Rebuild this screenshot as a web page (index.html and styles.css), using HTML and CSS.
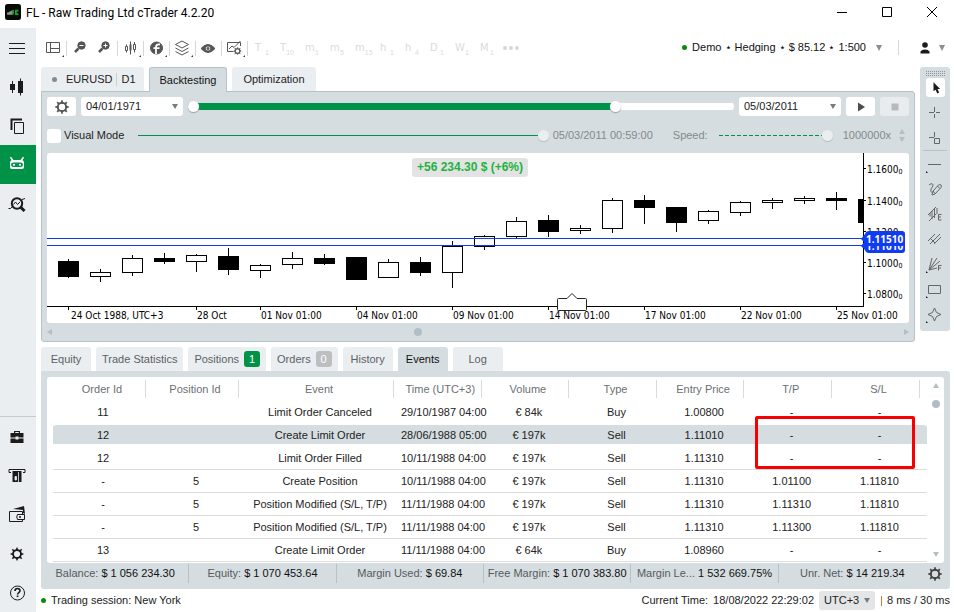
FILE: index.html
```html
<!DOCTYPE html>
<html lang="en">
<head>
<meta charset="utf-8">
<title>FL - Raw Trading Ltd cTrader 4.2.20</title>
<link rel="stylesheet" href="styles.css">
</head>
<body>
<svg class="defs" width="0" height="0" aria-hidden="true">
  <symbol id="gear" viewBox="0 0 16 16">
    <circle cx="8" cy="8" r="4.2" fill="none" stroke="currentColor" stroke-width="1.8"/>
    <path d="M6.800 4.200 8 1.200l1.200 3zM6.800 11.800 8 14.800l1.200-3zM4.200 6.800 1.200 8l3 1.200zM11.800 6.800l3 1.200-3 1.200zM4.400 6 3 3l3 1.400zM11.600 6 13 3l-3 1.400zM4.400 10 3 13l3-1.400zM11.600 10l1.400 3-3-1.400z" fill="currentColor" stroke="currentColor" stroke-width=".8"/>
  </symbol>
</svg>

<header class="titlebar">
  <svg class="app-icon" viewBox="0 0 16 16"><rect width="16" height="16" rx="2.500" fill="#080a08"/><path d="M2 10h1V9h1v1h1V8h1v2h1V6.500" fill="none" stroke="#8b9a8e" stroke-width="1.300"/><path d="M8 6v4.500M13.500 6.700h-2.600v3.400h2.600" fill="none" stroke="#18a22c" stroke-width="1.800"/></svg>
  <h1>FL - Raw Trading Ltd cTrader 4.2.20</h1>
  <div class="window-buttons">
    <button aria-label="Minimize"><svg viewBox="0 0 12 12"><path d="M1 6.500h10"/></svg></button>
    <button aria-label="Maximize"><svg viewBox="0 0 12 12"><path d="M1.500 1.500h9v9h-9z"/></svg></button>
    <button aria-label="Close"><svg viewBox="0 0 12 12"><path d="M1 1l10 10M11 1 1 11"/></svg></button>
  </div>
</header>

<div class="app">
  <nav class="sidebar">
    <button aria-label="Menu"><svg viewBox="0 0 24 24"><path class="line" d="M4 7.500h16M4 12.500h16M4 17.500h16"/></svg></button>
    <button aria-label="Trade"><svg viewBox="0 0 24 24"><path d="M5 9h5v6H5zM13 6h5v12h-5z"/><path class="line" d="M7.500 6v12M15.500 3.500v17"/></svg></button>
    <button aria-label="Copy"><svg viewBox="0 0 24 24"><path d="M6.500 16V5.500H17" fill="none" stroke="#1b1b1b" stroke-width="2"/><path class="line" d="M9.500 8.500h9v11h-9z"/></svg></button>
    <button aria-label="Automate" class="active"><svg viewBox="0 0 24 24"><path class="white" d="M5 4.500l1-.8L8.600 7h6.800L18 3.700l1 .8-1.500 2.700Q19 8 19 9.500V14q0 2-2 2H7q-2 0-2-2V9.500Q5 8 6.500 7.200z"/><path class="green" d="M8.500 9.500h7q2.500 0 2.500 2.300T15.500 14h-7Q6 14 6 11.800T8.500 9.500z"/><circle class="white" cx="9" cy="11.800" r="1.100"/><circle class="white" cx="15" cy="11.800" r="1.100"/></svg></button>
    <button aria-label="Analyze"><svg viewBox="0 0 24 24"><circle cx="12" cy="11.500" r="5.200" fill="none" stroke="#1b1b1b" stroke-width="2"/><path d="M15.500 15l4 4" fill="none" stroke="#1b1b1b" stroke-width="3"/><path class="line" d="M3.500 16.500h2l2-2M8.500 12.500l2-2.500 2 2.500 2.500-2.500M17 7.500l3-1"/></svg></button>
    <div class="sidebar-bottom">
      <button aria-label="Accounts"><svg viewBox="0 0 24 24"><path d="M9 8V6h6v2h3.500v4.500h-5v-1h-3v1H5.500V8zm1.200 0h3.600v-.9h-3.600zM5.500 13.500h5v1h3v-1h5V18h-13z"/></svg></button>
      <button aria-label="Withdraw"><svg viewBox="0 0 24 24"><path class="line" d="M6 8.500H4V5.500h16v3h-2"/><path d="M7.500 7h9v11h-9z"/><path d="M10 12.500h1.500V16H10zM13.500 8v10" fill="#eaeef1" stroke="#eaeef1" stroke-width=".8"/></svg></button>
      <button aria-label="Wallet"><svg viewBox="0 0 24 24"><path d="M8 6l11-3 1 8-2-1V7z"/><path class="line" d="M17.500 11V8.500h-13v10h13V16.500M12.500 11.500h7v5h-7q-1.500-2.500 0-5z"/><circle cx="15" cy="14" r="1"/></svg></button>
      <button aria-label="Settings"><svg viewBox="0 0 24 24"><use href="#gear" x="4.500" y="4.500" width="15" height="15"/></svg></button>
      <button aria-label="Help"><svg viewBox="0 0 24 24"><circle class="line" cx="12.500" cy="12" r="7"/><path d="M10 10q0-2.500 2.500-2.500T15 9.800q0 1-1.200 1.800t-1.200 1.900" fill="none" stroke="#1b1b1b" stroke-width="1.600"/><path d="M11.700 14.500h1.700v1.600h-1.700z"/></svg></button>
    </div>
  </nav>

  <main class="main">
    <div class="toolbar">
      <button class="tool sep drop" aria-label="Layout"><svg viewBox="0 0 24 24"><path d="M5.500 6.500h13v10h-13zM9.500 6.500v10M9.500 12.500h9"/></svg></button>
      <button class="tool" aria-label="Zoom out"><svg viewBox="0 0 24 24"><circle cx="14.500" cy="9.500" r="3.700" class="solid"/><path d="M11.500 12.500l-3.500 3.500" stroke-width="2.500"/><path d="M12.500 9.500h4" class="cut"/></svg></button>
      <button class="tool sep" aria-label="Zoom in"><svg viewBox="0 0 24 24"><circle cx="13.500" cy="9.500" r="3.700" class="solid"/><path d="M10.500 12.500l-3.500 3.500" stroke-width="2.500"/><path d="M11.500 9.500h4M13.500 7.500v4" class="cut"/></svg></button>
      <button class="tool sep drop" aria-label="Chart type"><svg viewBox="0 0 24 24"><path d="M7.500 10.500h2v4h-2zM8.500 8.500v2M8.500 14.500v2M15.500 8.500h2v5h-2zM16.500 6v2.500M16.500 13.500v3"/><path class="solid" d="M12 8.500h1v6h-1z"/><path d="M12.500 5.500v13"/></svg></button>
      <button class="tool sep drop" aria-label="Indicators"><svg viewBox="0 0 24 24"><circle class="solid" cx="12.500" cy="12" r="6"/><path class="cut" stroke-width="1.800" d="M12 18v-7q0-3 4-2.500M9.500 12.200h6"/></svg></button>
      <button class="tool sep drop" aria-label="Objects"><svg viewBox="0 0 24 24"><path d="M12 5l6.500 3.500L12 12 5.500 8.500zM5.500 12l6.500 3.500 6.500-3.500M5.500 15.500L12 19l6.500-3.500"/></svg></button>
      <button class="tool sep" aria-label="View"><svg viewBox="0 0 24 24"><path class="solid" d="M5 12.500q7-8 14 0-7 8-14 0z"/><circle cx="12" cy="12.500" r="2.600" fill="#fff"/><circle class="solid" cx="12" cy="12.500" r="1"/></svg></button>
      <button class="tool sep drop" aria-label="Chart settings"><svg viewBox="0 0 24 24"><path d="M18.500 10V6.500h-13v9h6M7 13l3-3 2 1.500 6.500-6.500"/><use href="#gear" x="11" y="10.500" width="9" height="9"/></svg></button>
      <div class="periods">
        <button disabled>T<sub>1</sub></button><button disabled>T<sub>10</sub></button><button disabled>m<sub>1</sub></button><button disabled>m<sub>5</sub></button><button disabled>m<sub>15</sub></button><button disabled>h<sub>1</sub></button><button disabled>h<sub>4</sub></button><button disabled>D<sub>1</sub></button><button disabled>W<sub>1</sub></button><button disabled>M<sub>1</sub></button>
        <button disabled class="more" aria-label="More periods"><i></i><i></i><i></i></button>
      </div>
      <button class="account"><span class="dot"></span>Demo ⋆ Hedging ⋆ $ 85.12 ⋆ 1:500<span class="caret"></span></button>
      <button class="user" aria-label="Profile"><svg viewBox="0 0 10 12"><circle cx="5" cy="3" r="2.800"/><path d="M.5 11.500V9.500Q1.500 7.500 5 7.500t4.500 2v2z"/></svg><span class="caret"></span></button>
    </div>

    <div class="workspace">
      <section class="chart-area">
        <div class="tabs">
          <button class="tab symbol"><span class="bullet"></span>EURUSD<span class="period">D1</span></button>
          <button class="tab selected outlined">Backtesting</button>
          <button class="tab">Optimization</button>
        </div>
        <div class="panel outlined-panel">
          <div class="controls">
            <button class="box" aria-label="Backtesting settings"><svg viewBox="0 0 16 16"><use href="#gear"/></svg></button>
            <span class="select date"><select aria-label="Start date"><option>04/01/1971</option></select></span>
            <div class="range-pair">
              <input type="range" aria-label="Range start" min="0" max="1000" value="0">
              <input type="range" aria-label="Range end" min="0" max="1000" value="789">
            </div>
            <span class="select date"><select aria-label="End date"><option>05/03/2011</option></select></span>
            <button class="box" aria-label="Start"><svg viewBox="0 0 16 16"><path d="M5 3.500v9l7-4.500z"/></svg></button>
            <button class="box" aria-label="Stop" disabled><svg viewBox="0 0 16 16"><path d="M4.500 4.500h7v7h-7z"/></svg></button>
          </div>
          <div class="visual">
            <label class="check"><input type="checkbox">Visual Mode</label>
            <input class="thin progress" type="range" aria-label="Progress" disabled min="0" max="100" value="100">
            <span class="stamp">05/03/2011 00:59:00</span>
            <label class="speed">Speed:<input class="thin dashed" type="range" disabled min="0" max="100" value="100"></label>
            <span class="times">1000000x</span>
            <span class="spin"><i class="up"></i><i class="down"></i></span>
          </div>
          <div class="chart">
            <output class="profit">+56 234.30 $ (+6%)</output>
            <svg viewBox="47 153 862 170" role="img" aria-label="EURUSD daily candles">
              <path class="axis" d="M863.500 153v154M47 306.500h817M68.500 307v3M196.500 307v3M260.500 307v3M356.500 307v3M452.500 307v3M548.500 307v3M644.500 307v3M740.500 307v3M836.500 307v3M864 168.500h2M864 200.500h2M864 231.500h2M864 262.500h2M864 293.500h2"/>
              <path class="axis" d="M68.500 259v19M100.500 269v13M132.500 255v21M164.500 253v11M196.500 254v18M228.500 248v27M260.500 264v14M292.500 252v17M324.500 254v11M388.500 259v19M420.500 257v19M452.500 241v47M484.500 235v15M516.500 217v21M548.500 215v22M580.500 225v9M612.500 198v35M644.500 195v29M676.500 207v25M708.500 210v14M740.500 201v15M772.500 198v11M804.500 196v8M836.500 192v18"/>
              <g class="bear">
                <rect x="58" y="261" width="21" height="16"/><rect x="154" y="258" width="21" height="4"/><rect x="218" y="256" width="21" height="14"/><rect x="314" y="258" width="21" height="6"/><rect x="346" y="257" width="21" height="23"/><rect x="410" y="262" width="21" height="11"/><rect x="538" y="220" width="21" height="12"/><rect x="634" y="200" width="21" height="8"/><rect x="666" y="207" width="21" height="16"/><rect x="826" y="198" width="21" height="3"/><rect x="858" y="199" width="5" height="24"/>
              </g>
              <g class="bull">
                <rect x="90.500" y="272.500" width="20" height="4"/><rect x="122.500" y="258.500" width="20" height="14"/><rect x="186.500" y="255.500" width="20" height="6"/><rect x="250.500" y="265.500" width="20" height="5"/><rect x="282.500" y="258.500" width="20" height="6"/><rect x="378.500" y="262.500" width="20" height="15"/><rect x="442.500" y="246.500" width="20" height="26"/><rect x="474.500" y="236.500" width="20" height="10"/><rect x="506.500" y="221.500" width="20" height="15"/><rect x="570.500" y="228.500" width="20" height="2"/><rect x="602.500" y="200.500" width="20" height="28"/><rect x="698.500" y="211.500" width="20" height="9"/><rect x="730.500" y="202.500" width="20" height="10"/><rect x="762.500" y="200.500" width="20" height="2"/><rect x="794.500" y="198.500" width="20" height="2"/>
              </g>
              <path class="level" d="M47 238.500h816M47 245.500h816"/>
              <g class="scale">
                <text x="71" y="319">24 Oct 1988, UTC+3</text><text x="197" y="319">28 Oct</text><text x="261" y="319">01 Nov 01:00</text><text x="357" y="319">04 Nov 01:00</text><text x="453" y="319">09 Nov 01:00</text><text x="549" y="319">14 Nov 01:00</text><text x="645" y="319">17 Nov 01:00</text><text x="741" y="319">22 Nov 01:00</text><text x="837" y="319">25 Nov 01:00</text>
                <text x="867" y="173">1.1600<tspan class="pip" dy="1">0</tspan></text><text x="867" y="205">1.1400<tspan class="pip" dy="1">0</tspan></text><text x="867" y="236">1.1200<tspan class="pip" dy="1">0</tspan></text><text x="867" y="267">1.1000<tspan class="pip" dy="1">0</tspan></text><text x="867" y="298">1.0800<tspan class="pip" dy="1">0</tspan></text>
              </g>
              <g class="tag"><path d="M861 246l4-5q1-3 4-3h33q3 0 3 3v9q0 3-3 3h-33q-3 0-4-3z"/><text x="866" y="250">1.11010</text><path d="M861 239l4-5q1-3 4-3h33q3 0 3 3v9q0 3-3 3h-33q-3 0-4-3z"/><text x="866" y="243">1.11510</text></g>
              <path class="callout" d="M558.500 298.500h8.500l5-5 5 5h8.500q1 0 1 1v10q0 1-1 1h-27q-1 0-1-1v-10q0-1 1-1z"/>
            </svg>
          </div>
          <div class="hscroll"><i class="left"></i><i class="thumb"></i><i class="right"></i></div>
        </div>
      </section>

      <aside class="palette">
        <div class="grip"></div>
        <button class="cursor" aria-label="Cursor"><svg viewBox="0 0 24 24"><path d="M9 5v11l2.500-2 2 4.500 2.300-1-2-4.300H17z" fill="#1b1b1b" stroke="none"/></svg></button>
        <button aria-label="Crosshair"><svg viewBox="0 0 24 24"><path d="M6 11.500h5M13 11.500h4M11.500 6v5M11.500 13v4"/></svg></button>
        <button aria-label="Marker crosshair"><svg viewBox="0 0 24 24"><path d="M6 11.500h5M11.500 6v5M11.500 12.500h5v5h-5z"/></svg></button>
        <hr>
        <button class="drop" aria-label="Line"><svg viewBox="0 0 24 24"><path d="M5 12.500h13"/></svg></button>
        <button aria-label="Brush"><svg viewBox="0 0 24 24"><path d="M6 8q2-2 3.500-1T8 12q-1 3 1 3.500M9 18l1-4 5.500-6q1.500-1 2.500 0t0 2.500L12 17zM10 14l2 2.500M14.500 9l2.500 2.500"/></svg></button>
        <button aria-label="Equidistant channel"><svg viewBox="0 0 24 24"><path d="M5 13l8-8M7 14.500V11M9 17V9M11.500 16V7M14 12V6M6 19l7-7"/><path d="M18.500 12.500h-3v5.500h3M15.500 15h2.500"/></svg></button>
        <button aria-label="Pitchfork"><svg viewBox="0 0 24 24"><path d="M5 14l7-7M7 17L17 7M11 17l7-7M8 12l4 4"/></svg></button>
        <button class="drop" aria-label="Fibonacci"><svg viewBox="0 0 24 24"><path d="M6 18l3-12M6 18l8-12M6 18l11-9M6 18l8-2"/><path d="M18.500 13.500H15.500v5M15.500 16h2.500"/></svg></button>
        <button class="drop" aria-label="Rectangle"><svg viewBox="0 0 24 24"><path d="M5.500 8.500h12v8h-12z"/></svg></button>
        <button class="drop" aria-label="Shape"><svg viewBox="0 0 24 24"><path d="M11.500 6l2 4.500 4.500 2-4.500 2-2 4.500-2-4.500-4.500-2 4.500-2z"/></svg></button>
      </aside>
    </div>

    <section class="trade-watch">
      <div class="tabs muted">
        <button class="tab">Equity</button>
        <button class="tab">Trade Statistics</button>
        <button class="tab">Positions<span class="badge on">1</span></button>
        <button class="tab">Orders<span class="badge">0</span></button>
        <button class="tab">History</button>
        <button class="tab selected">Events</button>
        <button class="tab">Log</button>
      </div>
      <div class="panel watch-panel">
        <div class="sheet">
          <table>
            <colgroup><col class="c-id"><col class="c-id"><col class="c-event"><col><col><col><col><col><col class="c-last"></colgroup>
            <thead><tr><th>Order Id</th><th>Position Id</th><th>Event</th><th>Time (UTC+3)</th><th>Volume</th><th>Type</th><th>Entry Price</th><th>T/P</th><th>S/L</th></tr></thead>
            <tbody>
              <tr class="plain"><td>11</td><td></td><td>Limit Order Canceled</td><td>29/10/1987 04:00</td><td>€ 84k</td><td>Buy</td><td>1.00800</td><td>-</td><td>-</td></tr>
              <tr class="current"><td>12</td><td></td><td>Create Limit Order</td><td>28/06/1988 05:00</td><td>€ 197k</td><td>Sell</td><td>1.11010</td><td>-</td><td>-</td></tr>
              <tr><td>12</td><td></td><td>Limit Order Filled</td><td>10/11/1988 04:00</td><td>€ 197k</td><td>Sell</td><td>1.11310</td><td>-</td><td>-</td></tr>
              <tr><td>-</td><td>5</td><td>Create Position</td><td>10/11/1988 04:00</td><td>€ 197k</td><td>Sell</td><td>1.11310</td><td>1.01100</td><td>1.11810</td></tr>
              <tr><td>-</td><td>5</td><td>Position Modified (S/L, T/P)</td><td>11/11/1988 04:00</td><td>€ 197k</td><td>Sell</td><td>1.11310</td><td>1.11310</td><td>1.11810</td></tr>
              <tr><td>-</td><td>5</td><td>Position Modified (S/L, T/P)</td><td>11/11/1988 04:00</td><td>€ 197k</td><td>Sell</td><td>1.11310</td><td>1.11300</td><td>1.11810</td></tr>
              <tr><td>13</td><td></td><td>Create Limit Order</td><td>11/11/1988 04:00</td><td>€ 64k</td><td>Buy</td><td>1.08960</td><td>-</td><td>-</td></tr>
            </tbody>
          </table>
          <div class="vscroll"><i class="up"></i><i class="thumb"></i><i class="down"></i></div>
          <div class="highlight"></div>
        </div>
        <div class="totals">
          <span>Balance: <b>$ 1 056 234.30</b></span>
          <span>Equity: <b>$ 1 070 453.64</b></span>
          <span>Margin Used: <b>$ 69.84</b></span>
          <span>Free Margin: <b>$ 1 070 383.80</b></span>
          <span>Margin Le... <b>1 532 669.75%</b></span>
          <span>Unr. Net: <b>$ 14 219.34</b></span>
          <button aria-label="Table settings"><svg viewBox="0 0 16 16"><use href="#gear"/></svg></button>
        </div>
      </div>
    </section>

    <footer class="status">
      <span class="dot"></span><span>Trading session: New York</span>
      <label class="clock"><span>Current Time:</span><span>18/08/2022 22:29:02</span><span class="select zone"><select><option>UTC+3</option></select></span></label>
      <span class="bar"></span><span>8 ms / 30 ms</span>
    </footer>
  </main>
</div>
</body>
</html>
```
FILE: styles.css
```css
* { box-sizing: border-box; }

body {
  margin: 0;
  min-height: 100vh;
  display: flex;
  flex-direction: column;
  background: #fff;
  color: #222;
  font: 11px/13px "Liberation Sans", Arial, sans-serif;
}

button, input, select {
  margin: 0;
  padding: 0;
  border: 0;
  background: none;
  color: inherit;
  font: inherit;
}

.defs { position: absolute; }

.dot {
  flex: none;
  width: 5px;
  height: 5px;
  border-radius: 50%;
  background: #0a8a0f;
}

.caret {
  border: 3px solid transparent;
  border-top: 6px solid #8a8f92;
  border-bottom: 0;
}

/* Title bar */
.titlebar {
  display: flex;
  align-items: center;
  height: 28px;
  padding-left: 5px;
  color: #000;
}
.app-icon { width: 16px; height: 16px; margin-bottom: 4px; }
.titlebar h1 {
  margin: 0 0 3px 5px;
  font: 12px/16px Roboto, "Noto Sans", sans-serif;
}
.window-buttons { display: flex; margin-left: auto; margin-bottom: 4px; }
.window-buttons button { width: 45px; height: 24px; display: grid; place-items: center; }
.window-buttons svg { width: 12px; height: 12px; fill: none; stroke: #000; }

.app { display: flex; flex: 1; }

/* Sidebar */
.sidebar {
  flex: none;
  width: 36px;
  display: flex;
  flex-direction: column;
  background: #eaeef1;
  color: #1b1b1b;
}
.sidebar button {
  width: 100%;
  height: 39px;
  display: grid;
  place-items: center;
  padding-right: 3px;
}
.sidebar .active { background: #009347; }
.sidebar svg { width: 24px; height: 24px; fill: #1b1b1b; }
.sidebar .line { fill: none; stroke: #1b1b1b; }
.sidebar .white { fill: #fff; }
.sidebar .green { fill: #009347; }
.sidebar-bottom { margin-top: auto; border-top: 1px solid #c3cccf; }

.main {
  flex: 1;
  min-width: 0;
  display: flex;
  flex-direction: column;
  padding: 0 4px 0 5px;
}

/* Toolbar */
.toolbar { display: flex; align-items: center; height: 39px; }
.tool {
  position: relative;
  flex: none;
  width: 25px;
  height: 24px;
  color: #555;
}
.tool svg { display: block; width: 24px; height: 24px; fill: none; stroke: #555; }
.tool .solid { fill: #555; }
.tool .cut { stroke: #fff; }
.tool use { stroke: none; }
.sep { margin-right: 1px; }
.sep::before {
  content: "";
  position: absolute;
  right: -1px;
  top: 5px;
  width: 1px;
  height: 15px;
  background: #d3d7d9;
}
.drop::after {
  content: "";
  position: absolute;
  right: 2px;
  bottom: 3px;
  border: 1px solid #333;
  border-top-color: transparent;
  border-left-color: transparent;
}
.periods { display: flex; color: #d9dbdc; font-family: "DejaVu Sans", sans-serif; font-size: 10px; }
.periods button {
  width: 25px;
  height: 24px;
  padding: 0 4px 0 7px;
  display: flex;
  align-items: center;
}
.periods sub {
  align-self: flex-end;
  margin-left: auto;
  font: 7px/14px "Liberation Sans", Arial, sans-serif;
}
.periods .more { gap: 2px; padding: 0 0 0 5px; }
.more i { width: 4px; height: 4px; border-radius: 50%; background: #d5d8da; }
.account {
  display: flex;
  align-items: center;
  gap: 5px;
  margin-left: auto;
  padding-right: 16px;
  color: #111;
  white-space: nowrap;
}
.account .caret { margin-left: 5px; }
.user {
  display: flex;
  align-items: center;
  gap: 9px;
  height: 15px;
  padding: 0 5px 0 21px;
  border-left: 1px solid #d3d7d9;
}
.user svg { width: 10px; height: 12px; fill: #1b1b1b; }

/* Tabs and panels */
.workspace { display: flex; align-items: flex-start; gap: 5px; }
.chart-area { flex: 1; min-width: 0; }
.tabs { display: flex; gap: 5px; height: 24px; }
.tab {
  min-width: 50px;
  padding: 0 11px;
  display: flex;
  align-items: center;
  justify-content: center;
  border-radius: 3px 3px 0 0;
  background: #eaeef1;
  color: #222;
  white-space: nowrap;
}
.tab.selected { background: #d5dde0; color: #111; }
.tab.outlined {
  position: relative;
  height: 25px;
  border: 1px solid #b5c2c7;
  border-bottom: 0;
  padding: 0 10px;
}
.tab.symbol { padding-right: 8px; }
.bullet { width: 5px; height: 5px; margin-right: 9px; border-radius: 50%; background: #858a8c; }
.period { margin-left: 4px; padding-left: 4px; border-left: 1px solid #c8d0d3; }
.muted .tab { padding: 0 6px; color: #5b6165; }
.muted .selected { color: #111; }
.badge {
  width: 16px;
  height: 16px;
  margin-left: 5px;
  border-radius: 3px;
  background: #bcbfc0;
  color: #fff;
  line-height: 16px;
  text-align: center;
}
.badge.on { background: #009347; }
.panel { background: #d5dde0; border-radius: 0 3px 3px 3px; }
.outlined-panel { padding: 5px; padding-bottom: 0; border: 1px solid #b5c2c7; }

/* Backtesting controls */
.controls { display: flex; align-items: center; gap: 5px; height: 19px; }
.box {
  flex: none;
  width: 29px;
  height: 19px;
  display: grid;
  place-items: center;
  border-radius: 3px;
  background: #fff;
  color: #555;
}
.box svg { width: 16px; height: 16px; fill: #4c4c4c; }
.box:disabled { background: #e8ecee; }
.box:disabled svg { fill: #b6babc; }
.select { position: relative; display: block; flex: none; }
.select select {
  appearance: none;
  display: block;
  width: 100%;
  height: 19px;
  padding: 0 5px;
  border-radius: 3px;
  background: #fff;
}
.select::after {
  content: "";
  position: absolute;
  right: 5px;
  top: 7px;
  border: 3px solid transparent;
  border-top: 5px solid #777c7f;
  border-bottom: 0;
}
.date { width: 102px; }

input[type="range"] { appearance: none; height: 11px; min-width: 0; opacity: 1; }
input[type="range"]::-webkit-slider-thumb {
  appearance: none;
  width: 11px;
  height: 11px;
  border-radius: 50%;
  background: #fff;
  box-shadow: 0 1px 1px #9aa5aa;
}
.range-pair { flex: 1; display: grid; align-items: center; }
.range-pair input { grid-area: 1 / 1; width: 100%; pointer-events: none; }
.range-pair input::-webkit-slider-thumb { pointer-events: auto; }
.range-pair input:first-child {
  background: linear-gradient(90deg, #009347 78%, #fff 78%) center / 100% 7px no-repeat;
  border-radius: 6px;
}
.visual { display: flex; align-items: center; height: 15px; margin: 12px 0 10px; color: #84898b; }
.check { display: flex; align-items: center; gap: 3px; color: #222; }
.check input { appearance: none; width: 14px; height: 14px; border-radius: 3px; background: #fff; }
.visual .thin::-webkit-slider-thumb { background: #eaeef1; box-shadow: 0 1px 1px #b3bdc1; }
.progress {
  flex: 1;
  margin: 0 4px 0 14px;
  background: linear-gradient(#009347, #009347) center top 5px / 100% 1px no-repeat;
}
.stamp { margin-right: 20px; }
.speed { display: flex; align-items: center; gap: 11px; }
.dashed {
  width: 114px;
  background: repeating-linear-gradient(90deg, #009347 0 4px, transparent 4px 6px) center top 5px / 100% 1px no-repeat;
}
.times { margin: 0 8px 0 10px; }
.spin { display: flex; flex-direction: column; gap: 3px; margin-right: 4px; }
i.up, i.down { border: 3px solid transparent; }
i.up { border-bottom: 5px solid #b3bfc5; border-top: 0; }
i.down { border-top: 5px solid #b3bfc5; border-bottom: 0; }

/* Chart */
.chart { position: relative; background: #fff; border-radius: 3px; }
.chart svg { display: block; width: 100%; shape-rendering: crispEdges; }
.profit {
  position: absolute;
  left: 50%;
  top: 5px;
  transform: translateX(-50%);
  margin-left: -8px;
  padding: 0 5px;
  border-radius: 3px;
  background: #e3e3e3;
  color: #1db33f;
  font-size: 12px;
  font-weight: bold;
  line-height: 19px;
  white-space: nowrap;
}
.axis { fill: none; stroke: #000; }
.bear { fill: #000; }
.bull { fill: #fff; stroke: #000; }
.level { stroke: #0f3ce6; }
.scale { font: 10px "DejaVu Sans Condensed", "Noto Sans", sans-serif; fill: #000; }
.pip { font-size: 7px; }
.tag { fill: #0f3cf0; shape-rendering: auto; }
.tag text { fill: #fff; font: bold 10px "Noto Sans", sans-serif; }
.callout { fill: #fff; stroke: #222; shape-rendering: auto; }
.hscroll { display: flex; align-items: center; height: 18px; }
.hscroll .left { border: 3px solid transparent; border-right: 5px solid #b3bfc5; border-left: 0; }
.hscroll .right { border: 3px solid transparent; border-left: 5px solid #b3bfc5; border-right: 0; margin-left: auto; }
.thumb { width: 8px; height: 8px; border-radius: 50%; background: #b0bec5; }
.hscroll .thumb { margin-left: 42%; }

/* Drawing tools */
.palette {
  flex: none;
  width: 30px;
  padding: 4px 0 5px;
  display: flex;
  flex-direction: column;
  align-items: center;
  border-radius: 3px;
  background: #d5dde0;
}
.grip {
  width: 19px;
  height: 5px;
  margin-bottom: 2px;
  background: repeating-linear-gradient(90deg, #8b9498 0 1px, transparent 1px 2px) top / 100% 1px repeat-x,
    repeating-linear-gradient(90deg, #8b9498 0 1px, transparent 1px 2px) bottom / 100% 1px repeat-x,
    repeating-linear-gradient(90deg, #8b9498 0 1px, transparent 1px 2px) center / 100% 1px repeat-x;
}
.palette button {
  position: relative;
  width: 24px;
  height: 25px;
}
.palette svg { display: block; width: 24px; height: 24px; fill: none; stroke: #666; }
.palette .cursor {
  width: 19px;
  height: 19px;
  margin-bottom: 3px;
  display: grid;
  place-items: center;
  border-radius: 3px;
  background: #fff;
}
.palette .cursor svg { width: 20px; height: 20px; }
.palette hr { width: 24px; margin: 0; border: 0; border-top: 1px solid #b5c2c7; }
.palette .drop::after { right: auto; left: 3px; border-color: transparent transparent #111 #111; }

/* Trade watch */
.trade-watch { margin-top: 5px; }
.watch-panel { padding: 6px 0 0; }
.sheet {
  position: relative;
  display: flex;
  align-items: flex-start;
  margin: 0 6px;
  padding-left: 6px;
  height: 186px;
  overflow: hidden;
  border-radius: 3px;
  background: #fff;
}
table { flex: 1; width: 100%; table-layout: fixed; border-collapse: separate; border-spacing: 0; }
.c-id { width: 93px; }
.c-event { width: 155px; }
.c-last { width: 95px; }
th, td { padding: 0 0 0 7px; text-align: center; white-space: nowrap; }
th {
  position: relative;
  height: 24px;
  padding-left: 5px;
  color: #6b7073;
  font-weight: normal;
}
th::after {
  content: "";
  position: absolute;
  right: 0;
  top: 3px;
  width: 1px;
  height: 18px;
  background: #d8dcde;
}
th:last-child, td:last-child { padding-right: 7px; }
th:last-child::after { right: 7px; }
td {
  height: 23px;
  padding-top: 1px;
  padding-bottom: 2px;
  border-top: 1px solid #fff;
  border-bottom: 1px solid #dcdcdc;
}
.plain td { border-bottom-color: #fff; }
.current td {
  padding-bottom: 0;
  border-bottom: 3px solid #fff;
  background: #d5dde0;
  background-clip: padding-box;
}
.current td:first-child { border-radius: 3px 0 0 3px; }
.current td:last-child { border-radius: 0 3px 3px 0; }
.vscroll {
  flex: none;
  align-self: stretch;
  width: 17px;
  display: flex;
  flex-direction: column;
  align-items: center;
  padding: 6px 0;
}
.vscroll .thumb { margin-top: 12px; }
.vscroll .down { margin-top: auto; }
.highlight {
  position: absolute;
  right: 29px;
  top: 39px;
  width: 160px;
  height: 53px;
  border: 3px solid #f80000;
  border-radius: 2px;
}
.totals {
  display: grid;
  grid-template-columns: repeat(6, 1fr) 24px;
  height: 26px;
  padding: 1px 0 0 1px;
}
.totals span {
  height: 19px;
  border-right: 1px solid #b5c2c7;
  color: #555b5e;
  line-height: 19px;
  text-align: center;
  white-space: nowrap;
}
.totals span:nth-child(6) { border: 0; }
.totals b { color: #111; font-weight: normal; }
.totals button { height: 19px; display: grid; place-items: center; padding-right: 6px; color: #444; }
.totals svg { width: 16px; height: 16px; }

/* Status bar */
.status { display: flex; align-items: center; height: 23px; white-space: nowrap; }
.status .dot { margin-right: 5px; }
.clock { display: flex; align-items: center; gap: 5px; margin-left: auto; }
.zone { width: 56px; }
.zone select { background: #e3e5e6; }
.bar { width: 1px; height: 10px; margin: 0 5px 0 6px; background: #c08040; }
```
